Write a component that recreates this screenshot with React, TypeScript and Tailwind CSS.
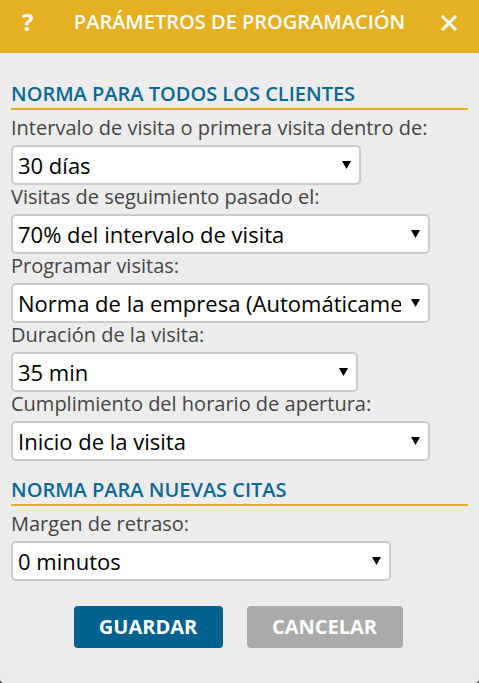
const Arrow = () => (
  <svg width="9" height="8" viewBox="0 0 9 8" className="shrink-0">
    <polygon points="0,0 9,0 4.5,8" fill="#000" />
  </svg>
);

const Field = ({ label, value, width }: { label: string; value: string; width: string }) => (
  <div className="flex flex-col">
    <div className="mt-[2px] mb-[7px] text-[20px] leading-[20px] text-[#454545]">{label}</div>
    <div
      className={`${width} h-[40px] flex items-center bg-white border-2 border-[#cbcbcb] rounded-[5px] pl-[5px] pr-[8px]`}
    >
      <span className="flex-1 min-w-0 text-[22px] text-black whitespace-nowrap overflow-hidden mr-[10px]">
        {value}
      </span>
      <Arrow />
    </div>
  </div>
);

const Heading = ({ children, className }: { children: string; className: string }) => (
  <div
    className={`${className} text-[20px] leading-[23px] font-semibold text-[#0a6894] pb-[3px] border-b-2 border-[#e5b022]`}
  >
    {children}
  </div>
);

export default function App() {
  return (
    <div className="w-[479px] h-[683px] bg-[#2a2a2a]" style={{ fontFamily: '"Open Sans", sans-serif' }}>
      <div className="h-[683px] bg-[#ececec] rounded-b-[4px] flex flex-col">
        <div className="h-[53px] bg-[#e5b022] flex items-start pt-[8px] text-white">
          <div className="w-[58px] pl-[22px] text-[24px] leading-[27px] font-bold">?</div>
          <div className="flex-1 text-center text-[20px] leading-[27px] font-semibold">
            PARÁMETROS DE PROGRAMACIÓN
          </div>
          <div className="w-[58px] flex justify-end pr-[22px] pt-[7px]">
            <svg width="16" height="16" viewBox="0 0 16 16">
              <path d="M2 2 L14 14 M14 2 L2 14" stroke="#fff" strokeWidth="3" strokeLinecap="square" />
            </svg>
          </div>
        </div>

        <div className="px-[11px] flex flex-col">
          <Heading className="mt-[29px]">NORMA PARA TODOS LOS CLIENTES</Heading>
          <div className="mt-[6px] flex flex-col">
            <Field label="Intervalo de visita o primera visita dentro de:" value="30 días" width="w-[350px]" />
            <Field label="Visitas de seguimiento pasado el:" value="70% del intervalo de visita" width="w-[419px]" />
            <Field label="Programar visitas:" value="Norma de la empresa (Automáticamente)" width="w-[419px]" />
            <Field label="Duración de la visita:" value="35 min" width="w-[347px]" />
            <Field label="Cumplimiento del horario de apertura:" value="Inicio de la visita" width="w-[419px]" />
          </div>

          <Heading className="mt-[17px]">NORMA PARA NUEVAS CITAS</Heading>
          <div className="mt-[6px] flex flex-col">
            <Field label="Margen de retraso:" value="0 minutos" width="w-[380px]" />
          </div>

          <div className="mt-[25px] flex justify-center gap-[24px] pr-[3px]">
            <button className="w-[149px] h-[42px] rounded-[4px] bg-[#00628f] text-white text-[20px] font-bold">
              GUARDAR
            </button>
            <button className="w-[156px] h-[42px] rounded-[4px] bg-[#aaaaaa] text-white text-[20px] font-bold">
              CANCELAR
            </button>
          </div>
        </div>
      </div>
    </div>
  );
}
